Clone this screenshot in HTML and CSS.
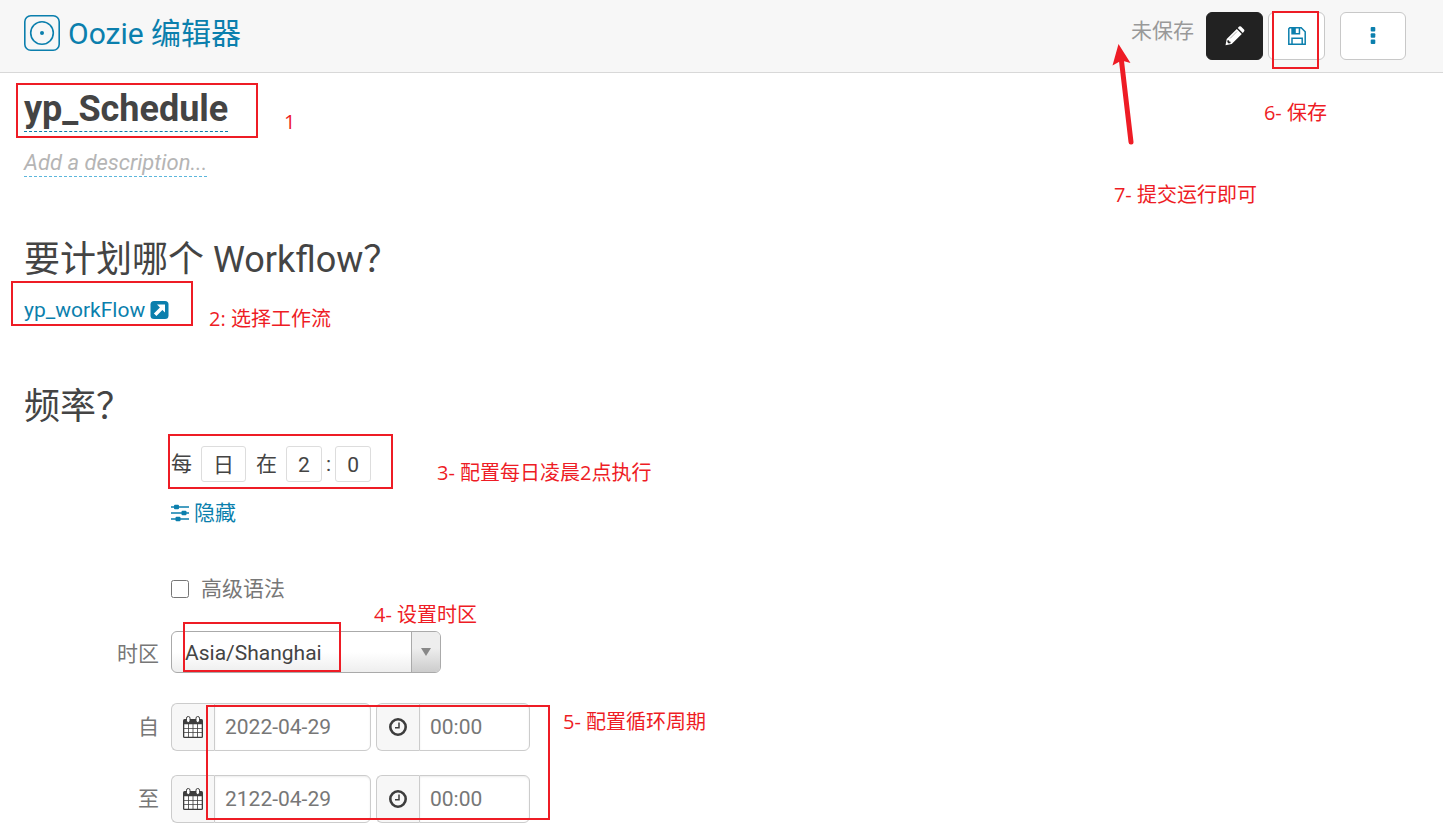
FILE: index.html
```html
<!DOCTYPE html>
<html lang="zh-CN">
<head>
    <meta charset="UTF-8">
    <title>Oozie 编辑器</title>
    <link rel="stylesheet" href="styles.css">
</head>
<body>
<header class="navbar">
    <a class="brand" href="#">
        <svg class="logo" viewBox="0 0 36 36">
            <rect x="0.8" y="0.8" width="34.4" height="34.4" rx="6"/>
            <circle cx="18" cy="18" r="11.3"/>
            <circle class="dot" cx="18" cy="18" r="2"/>
        </svg>
        <span>Oozie 编辑器</span>
    </a>
    <div class="actions">
        <span class="status">未保存</span>
        <button type="button" class="btn btn-dark" aria-label="编辑">
            <svg width="20" height="20" viewBox="0 0 20 20">
                <path fill="#fff" d="M.5 19.200l1.200-6.200L11.800 2.900l5 5L6.700 18zM12.800 1.900l1.300-1.300q1-.8 1.900 0l3 3q.8.900 0 1.900L17.800 6.900z"/>
                <path fill="#222" d="M2.700 14l1.400.4v1.200h1.200l.4 1.300-2 .5L2.200 16z"/>
                <path stroke="#999" stroke-width=".8" d="M5 12.500l7-7"/>
            </svg>
        </button>
        <button type="button" class="btn" aria-label="保存">
            <svg width="18" height="18" viewBox="0 0 18 18" fill="none" stroke="#0b7fad" stroke-width="1.500">
                <path d="M1.800.8h11.400l4 4v12.400H.8V1.800z"/>
                <path d="M4 17v-5.800h10.200V17"/>
                <path fill="#0b7fad" stroke="none" d="M3.300 1h8.900v6.500H3.300z"/>
                <path fill="#fff" stroke="none" d="M7.800 1.500h2.900v4.500H7.800z"/>
            </svg>
        </button>
        <button type="button" class="btn btn-menu" aria-label="更多">
            <svg width="6" height="18" viewBox="0 0 6 18" fill="#0b7fad">
                <rect x=".7" y="0" width="4.600" height="4.600" rx="1"/>
                <rect x=".7" y="6.200" width="4.600" height="4.600" rx="1"/>
                <rect x=".7" y="12.400" width="4.600" height="4.600" rx="1"/>
            </svg>
        </button>
    </div>
</header>

<main class="content">
    <h1><a href="#" class="editable">yp_Schedule</a></h1>
    <p class="description"><a href="#" class="editable">Add a description...</a></p>

    <h2>要计划哪个 Workflow？</h2>
    <a class="workflow" href="#">
        <span>yp_workFlow</span>
        <svg width="19" height="18" viewBox="0 0 18 18">
            <rect width="18" height="18" rx="3.500" fill="#0b7fad"/>
            <path fill="#fff" d="M6.500 3.500h8v8l-2.600-2.600-6 6-2.500-2.500 6-6z"/>
        </svg>
    </a>

    <h2 class="frequency-title">频率？</h2>
    <form class="schedule">
        <div class="frequency">
            <label for="unit">每</label>
            <select id="unit" class="cron cron-unit"><option>日</option></select>
            <label for="hour">在</label>
            <select id="hour" class="cron"><option>2</option></select>
            <label class="colon" for="minute">:</label>
            <select id="minute" class="cron"><option>0</option></select>
        </div>

        <a class="toggle" href="#">
            <svg width="18" height="18" viewBox="0 0 18 18" fill="#0b7fad">
                <path d="M0 2.300h18v1.500H0zM0 8.300h18v1.500H0zM0 14.300h18v1.500H0z"/>
                <rect x="3" y=".7" width="5" height="4.600" rx="1"/>
                <rect x="10.500" y="6.700" width="5" height="4.600" rx="1"/>
                <rect x="4.500" y="12.700" width="5" height="4.600" rx="1"/>
            </svg>
            <span>隐藏</span>
        </a>

        <label class="advanced"><input type="checkbox">高级语法</label>

        <div class="row">
            <label for="timezone">时区</label>
            <div class="timezone">
                <select id="timezone"><option>Asia/Shanghai</option></select>
                <span class="caret"></span>
            </div>
        </div>

        <div class="row">
            <label for="start-date">自</label>
            <div class="input-group">
                <span class="addon"><svg class="calendar" viewBox="0 0 20 22"><use href="#calendar"/></svg></span>
                <input type="text" id="start-date" class="date" value="2022-04-29">
            </div>
            <div class="input-group">
                <span class="addon"><svg class="clock" viewBox="0 0 18 18"><use href="#clock"/></svg></span>
                <input type="text" class="time" value="00:00" aria-label="开始时间">
            </div>
        </div>

        <div class="row">
            <label for="end-date">至</label>
            <div class="input-group">
                <span class="addon"><svg class="calendar" viewBox="0 0 20 22"><use href="#calendar"/></svg></span>
                <input type="text" id="end-date" class="date" value="2122-04-29">
            </div>
            <div class="input-group">
                <span class="addon"><svg class="clock" viewBox="0 0 18 18"><use href="#clock"/></svg></span>
                <input type="text" class="time" value="00:00" aria-label="结束时间">
            </div>
        </div>
    </form>
</main>

<!-- step marks over the page -->
<div class="mark mark-name"></div>
<div class="mark mark-workflow"></div>
<div class="mark mark-frequency"></div>
<div class="mark mark-timezone"></div>
<div class="mark mark-period"></div>
<div class="mark mark-save"></div>
<svg class="arrow" viewBox="0 0 24 104">
    <path d="M9.500 17L19 98" stroke="#ee1c25" stroke-width="5" stroke-linecap="round"/>
    <path d="M6.500 0L18.500 19 9.500 16.500.500 21.500z" fill="#ee1c25"/>
</svg>
<span class="note note-name">1</span>
<span class="note note-workflow">2: 选择工作流</span>
<span class="note note-frequency">3- 配置每日凌晨2点执行</span>
<span class="note note-timezone">4- 设置时区</span>
<span class="note note-period">5- 配置循环周期</span>
<span class="note note-save">6- 保存</span>
<span class="note note-submit">7- 提交运行即可</span>

<!-- shared icons -->
<svg class="icons">
    <symbol id="calendar" viewBox="0 0 20 22">
        <path fill="#3d3d3d" d="M1.500 3h17q1.500 0 1.500 1.500v16q0 1.500-1.500 1.500h-17Q0 22 0 20.500v-16Q0 3 1.500 3z"/>
        <path fill="#fff" d="M1.300 8.200h3.800v3.700H1.300zM5.900 8.200h3.700v3.700H5.900zM10.400 8.200h3.700v3.700h-3.700zM14.900 8.200h3.800v3.700h-3.800zM1.300 12.700h3.800v3.600H1.300zM5.900 12.700h3.700v3.600H5.900zM10.400 12.700h3.700v3.600h-3.700zM14.900 12.700h3.800v3.600h-3.800zM1.300 17.100h3.800v3.600H1.300zM5.900 17.100h3.700v3.600H5.900zM10.400 17.100h3.700v3.600h-3.700zM14.900 17.100h3.800v3.600h-3.800z"/>
        <rect x="3.500" y=".5" width="3.500" height="6" rx="1.700" fill="#fff" stroke="#3d3d3d"/>
        <rect x="13" y=".5" width="3.500" height="6" rx="1.700" fill="#fff" stroke="#3d3d3d"/>
    </symbol>
    <symbol id="clock" viewBox="0 0 18 18">
        <circle cx="9" cy="9" r="7.700" fill="none" stroke="#3d3d3d" stroke-width="2.600"/>
        <path d="M10 4.500v5.300H6" fill="none" stroke="#3d3d3d" stroke-width="1.500"/>
    </symbol>
</svg>
</body>
</html>
```
FILE: styles.css
```css
* {
    box-sizing: border-box;
}

body {
    margin: 0;
    position: relative;
    font-family: Roboto, "Noto Sans CJK SC", sans-serif;
    font-size: 21px;
    line-height: 30px;
    color: #444;
    background: #fff;
}

a {
    color: #0b7fad;
    text-decoration: none;
}

svg {
    flex: none;
}

h1, h2, p {
    margin: 0;
}

/* top bar */
.navbar {
    display: flex;
    justify-content: space-between;
    align-items: center;
    height: 73px;
    padding: 0 37px 0 24px;
    background: #f7f7f7;
    border-bottom: 1px solid #d8d8d8;
}

.brand {
    display: flex;
    align-items: center;
    gap: 8px;
    padding-bottom: 6px;
    font-size: 30px;
    line-height: 36px;
}

.brand span {
    padding-top: 2px;
}

.logo {
    width: 36px;
    height: 36px;
    fill: none;
    stroke: #0b7fad;
    stroke-width: 1.6;
}

.logo .dot {
    fill: #0b7fad;
    stroke: none;
}

.actions {
    display: flex;
    align-items: center;
}

.status {
    margin-right: 12px;
    padding-bottom: 10px;
    color: #999;
}

.btn {
    display: flex;
    align-items: center;
    justify-content: center;
    width: 57px;
    height: 48px;
    padding: 0;
    background: #fff;
    border: 1px solid #c8c8c8;
    border-radius: 6px;
}

.btn-dark {
    margin-right: 5px;
    background: #222;
    border-color: #222;
}

.btn-menu {
    width: 66px;
    margin-left: 15px;
}

/* page */
.content {
    padding: 12px 24px 0;
}

h1 {
    display: flex;
    font-size: 36px;
    line-height: 44px;
}

h1 .editable {
    padding-top: 2px;
    color: #444;
    border-bottom: 1px dashed #0b7fad;
}

.description {
    display: flex;
    margin-top: 18px;
    font-size: 22px;
    font-style: italic;
    line-height: 26px;
}

.description .editable {
    color: #b5b5b5;
    border-bottom: 1px dashed #5cb6dc;
}

h2 {
    margin-top: 59px;
    font-size: 36px;
    font-weight: normal;
    line-height: 48px;
}

.workflow {
    display: flex;
    align-items: center;
    gap: 5px;
    width: max-content;
    margin-top: 11px;
}

.frequency-title {
    margin-top: 58px;
}

.schedule {
    padding-bottom: 7px;
}

.frequency {
    display: flex;
    align-items: center;
    margin: 15px 0 0 147px;
}

.cron {
    appearance: none;
    width: 36px;
    height: 36px;
    padding: 1px 0 0;
    font: inherit;
    color: #444;
    text-align: center;
    text-align-last: center;
    background: #fff;
    border: 1px solid #ddd;
    border-radius: 3px;
}

.cron-unit {
    width: 45px;
}

.frequency label {
    margin-right: 9px;
}

.cron-unit + label {
    margin-left: 10px;
}

.frequency .colon {
    margin: 0 4px;
}

.toggle {
    display: flex;
    align-items: center;
    gap: 5px;
    width: max-content;
    margin: 16px 0 0 147px;
}

.advanced {
    display: flex;
    align-items: center;
    gap: 12px;
    width: max-content;
    margin: 46px 0 27px 147px;
    color: #777;
}

.advanced input {
    width: 18px;
    height: 18px;
    margin: 0;
}

.row {
    display: flex;
    align-items: center;
    gap: 5px;
}

.row + .row {
    margin-top: 24px;
}

.advanced + .row + .row {
    margin-top: 30px;
}

.row label {
    width: 135px;
    margin-right: 7px;
    color: #777;
    text-align: right;
}

.advanced + .row label {
    padding-top: 4px;
}

.timezone {
    display: flex;
    align-items: center;
    width: 270px;
    height: 42px;
    border: 1px solid #aaa;
    border-radius: 6px;
    overflow: hidden;
    background: linear-gradient(#fff 50%, #eee);
}

.timezone select {
    appearance: none;
    flex: 1;
    height: 40px;
    padding: 2px 0 0 13px;
    font: inherit;
    color: #444;
    background: none;
    border: 0;
}

.caret {
    display: flex;
    align-items: center;
    justify-content: center;
    width: 29px;
    height: 40px;
    border-left: 1px solid #aaa;
    background: linear-gradient(#eee 40%, #ccc);
}

.caret::after {
    content: "";
    border: 5px solid transparent;
    border-top: 8px solid #888;
    border-bottom: 0;
}

.input-group {
    display: flex;
    height: 48px;
}

.addon {
    display: flex;
    align-items: center;
    justify-content: center;
    width: 43px;
    background: #f7f7f7;
    border: 1px solid #ccc;
    border-right: 0;
    border-radius: 6px 0 0 6px;
}

.calendar {
    width: 20px;
    height: 22px;
}

.clock {
    width: 18px;
    height: 18px;
}

.input-group input {
    padding: 0 10px;
    font: inherit;
    color: #777;
    background: #fff;
    border: 1px solid #ccc;
    border-radius: 0 6px 6px 0;
    box-shadow: inset 0 1px 2px rgba(0, 0, 0, 0.08);
}

.input-group .date {
    width: 157px;
}

.input-group .time {
    width: 111px;
}

/* step marks */
.mark {
    position: absolute;
    border: 2px solid #ee1c25;
    pointer-events: none;
}

.mark-name {
    left: 16px;
    top: 83px;
    width: 242px;
    height: 55px;
}

.mark-workflow {
    left: 11px;
    top: 281px;
    width: 182px;
    height: 45px;
}

.mark-frequency {
    left: 168px;
    top: 434px;
    width: 225px;
    height: 55px;
}

.mark-timezone {
    left: 183px;
    top: 622px;
    width: 158px;
    height: 50px;
}

.mark-period {
    left: 206px;
    top: 705px;
    width: 344px;
    height: 115px;
}

.mark-save {
    right: 124px;
    top: 11px;
    width: 47px;
    height: 58px;
}

.arrow {
    position: absolute;
    right: 307px;
    top: 44px;
    width: 24px;
    height: 104px;
}

.note {
    position: absolute;
    font-family: "Open Sans", "Noto Sans CJK SC", sans-serif;
    font-size: 20px;
    line-height: 28px;
    color: #ee1c25;
    white-space: nowrap;
}

.note-name {
    left: 284px;
    top: 108px;
}

.note-workflow {
    left: 209px;
    top: 305px;
}

.note-frequency {
    left: 437px;
    top: 459px;
}

.note-timezone {
    left: 374px;
    top: 601px;
}

.note-period {
    left: 563px;
    top: 708px;
}

.note-save {
    right: 116px;
    top: 99px;
}

.note-submit {
    right: 186px;
    top: 181px;
}

.icons {
    display: none;
}
```
